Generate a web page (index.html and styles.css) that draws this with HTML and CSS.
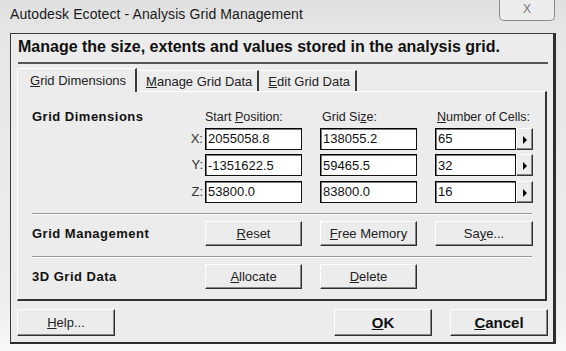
FILE: index.html
```html
<html>
<head>
 <meta charset="utf-8">
 <link rel="stylesheet" href="styles.css">
</head>
<body>
 <div class="window">
  <div class="titlebar">
   <span class="title">Autodesk Ecotect - Analysis Grid Management</span>
   <span class="close">X</span>
  </div>
  <div class="dialog">
   <h1 class="heading">Manage the size, extents and values stored in the analysis grid.</h1>
   <div class="tabs">
    <div class="tab active"><u>G</u>rid Dimensions</div>
    <div class="tab"><u>M</u>anage Grid Data</div>
    <div class="tab"><u>E</u>dit Grid Data</div>
   </div>
   <div class="panel">
    <div class="grid dims">
     <div class="label">Grid Dimensions</div>
     <div class="head first">Start <u>P</u>osition:</div>
     <div class="head">Grid Si<u>z</u>e:</div>
     <div class="head"><u>N</u>umber of Cells:</div>

     <div></div>
     <div class="pair"><span class="axis">X:</span><input class="field" value="2055058.8"></div>
     <input class="field" value="138055.2">
     <div class="pair"><input class="field" value="65"><button class="spin"></button></div>

     <div></div>
     <div class="pair"><span class="axis">Y:</span><input class="field" value="-1351622.5"></div>
     <input class="field" value="59465.5">
     <div class="pair"><input class="field" value="32"><button class="spin"></button></div>

     <div></div>
     <div class="pair"><span class="axis">Z:</span><input class="field" value="53800.0"></div>
     <input class="field" value="83800.0">
     <div class="pair"><input class="field" value="16"><button class="spin"></button></div>
    </div>
    <div class="rule"></div>
    <div class="grid actions">
     <div class="label">Grid Management</div>
     <button class="btn first"><u>R</u>eset</button>
     <button class="btn"><u>F</u>ree Memory</button>
     <button class="btn wide">Sa<u>y</u>e...</button>
    </div>
    <div class="rule"></div>
    <div class="grid actions">
     <div class="label">3D Grid Data</div>
     <button class="btn first"><u>A</u>llocate</button>
     <button class="btn"><u>D</u>elete</button>
    </div>
   </div>
   <div class="footer">
    <button class="btn big"><u>H</u>elp...</button>
    <button class="btn big strong ok"><u>O</u>K</button>
    <button class="btn big strong"><u>C</u>ancel</button>
   </div>
  </div>
 </div>
</body>
</html>
```
FILE: styles.css
```css
body {
 margin: 0;
 background: #f6f6f6;
 font-family: "Liberation Sans", Arial, sans-serif;
 font-size: 13px;
 color: #111;
}
u {
 text-decoration: underline;
 text-underline-offset: 1px;
}
.window {
 width: 566px;
 height: 351px;
 background: linear-gradient(to bottom, #e0e0e0 0, #e6e6e6 34px, #ededed 300px, #f8f8f8 351px);
 overflow: hidden;
}
.titlebar {
 display: flex;
 height: 33px;
 align-items: flex-start;
}
.title {
 padding: 6px 0 0 10px;
 font-size: 14px;
 letter-spacing: 0.1px;
 color: #1a1a1a;
}
.close {
 margin-left: auto;
 margin-right: 11px;
 width: 56px;
 height: 21px;
 box-sizing: border-box;
 border: 1px solid #8a8a8a;
 border-top: none;
 border-radius: 0 0 5px 5px;
 background: #ececec;
 text-align: center;
 font-size: 12px;
 line-height: 18px;
 color: #777;
}
.dialog {
 margin-left: 10px;
 width: 546px;
 height: 311px;
 box-sizing: border-box;
 background: #ececec;
 border: 1px solid #3c3c3c;
 border-right: 3px solid #2e2e2e;
 border-bottom: 2px solid #2e2e2e;
}
.heading {
 margin: 0 5px 0 7px;
 padding-top: 4px;
 padding-bottom: 6px;
 font-size: 16px;
 line-height: 18px;
 font-weight: bold;
 border-bottom: 2px solid #555;
}
.tabs {
 display: flex;
 margin: 4px 0 0 6px;
 height: 23px;
 align-items: flex-end;
}
.tab {
 height: 21px;
 box-sizing: border-box;
 padding: 3px 5px 0 8px;
 border-top: 1px solid #fff;
 border-right: 2px solid #3a3a3a;
 font-size: 13px;
 color: #222;
 white-space: nowrap;
}
.tab.active {
 height: 24px;
 margin-bottom: -1px;
 padding: 4px 9px 0 12px;
 border-left: 1px solid #fff;
 background: #ececec;
 position: relative;
}
.tab + .tab {
 padding-left: 9px;
}
.panel {
 margin: 0 6px;
 height: 210px;
 box-sizing: border-box;
 border-top: 1px solid #fff;
 border-left: 1px solid #fff;
 border-right: 2px solid #333;
 border-bottom: 2px solid #333;
 padding: 18px 0 0 14px;
}
.grid {
 display: grid;
 grid-template-columns: 136px 116px 97px 98px;
 column-gap: 18px;
}
.dims {
 row-gap: 4.5px;
 grid-template-rows: 13px 22px 22px 22px;
 align-items: center;
}
.label {
 font-weight: bold;
 letter-spacing: 0.5px;
 color: #111;
 white-space: nowrap;
}
.head {
 padding-left: 2px;
 font-size: 12.5px;
 color: #222;
 white-space: nowrap;
}
.head.first {
 padding-left: 19px;
}
.pair {
 display: flex;
 height: 22px;
}
.axis {
 width: 17px;
 padding-right: 2px;
 text-align: right;
 line-height: 22px;
 color: #333;
}
.field {
 flex: 1;
 min-width: 0;
 height: 22px;
 box-sizing: border-box;
 margin: 0;
 padding: 0 2px;
 border: 1px solid #111;
 border-top-color: #000;
 border-left-color: #000;
 box-shadow: inset 1px 1px 0 #777;
 background: #fff;
 font-family: inherit;
 font-size: 13px;
 color: #111;
}
.spin {
 width: 17px;
 height: 22px;
 margin: 0;
 padding: 0;
 box-sizing: border-box;
 background: #ececec;
 border: 1px solid;
 border-color: #fff #333 #333 #fff;
 box-shadow: inset -1px -1px 0 #888;
 position: relative;
}
.spin::after {
 content: "";
 position: absolute;
 left: 6px;
 top: 7px;
 border-left: 4px solid #000;
 border-top: 4px solid transparent;
 border-bottom: 4px solid transparent;
}
.rule {
 margin: 10px 13px 0 0;
 border-top: 1px solid #9a9a9a;
 border-bottom: 1px solid #fff;
}
.actions {
 align-items: center;
 margin: 6px 0 7px;
}
.btn {
 height: 25px;
 width: 97px;
 margin: 0;
 padding: 0;
 box-sizing: border-box;
 background: #ececec;
 border: 1px solid;
 border-color: #fff #2e2e2e #2e2e2e #fff;
 box-shadow: inset -1px -1px 0 #888;
 font-family: inherit;
 font-size: 13px;
 color: #222;
}
.btn.first {
 justify-self: end;
}
.btn.wide {
 width: 98px;
}
.footer {
 display: flex;
 margin: 8px 5px 0 6px;
}
.btn.big {
 width: 98px;
 height: 27px;
}
.btn.strong {
 font-weight: bold;
 font-size: 15px;
 color: #111;
}
.ok {
 margin-left: auto;
 margin-right: 18px;
}
```
